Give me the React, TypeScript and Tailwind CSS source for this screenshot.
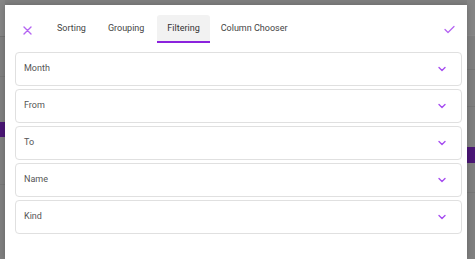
import React from "react";

const fields = ["Month", "From", "To", "Name", "Kind"];

function Chevron() {
  return (
    <svg width="10" height="10" viewBox="0 0 10 10" fill="none">
      <path d="M2 3.5 L5 6.5 L8 3.5" stroke="#a64df0" strokeWidth="1.4" strokeLinecap="round" strokeLinejoin="round" />
    </svg>
  );
}

export default function App() {
  return (
    <div className="relative w-[475px] h-[259px] overflow-hidden bg-[#7f7f7f]" style={{ fontFamily: "Roboto, 'Liberation Sans', sans-serif" }}>
      {/* background page under overlay */}
      <div className="flex h-full justify-between">
        <div className="flex w-[5px] flex-col">
          <div className="h-[37px] border-b border-[#727272] bg-[#858585]" />
          <div className="h-[40px] border-b border-[#777]" />
          <div className="h-[45px]" />
          <div className="h-[15px] bg-[#4a1675]" />
          <div className="h-[48px] border-b border-[#777]" />
        </div>
        <div className="flex w-[8px] flex-col">
          <div className="h-[36px] border-b border-[#888] bg-[#858585]" />
          <div className="h-[34px] border-b border-[#777]" />
          <div className="h-[37px] border-b border-[#777]" />
          <div className="h-[40px]" />
          <div className="h-[16px] bg-[#4a1675]" />
          <div className="h-[30px] border-b border-[#777]" />
        </div>
      </div>

      {/* dialog */}
      <div className="absolute left-[5px] top-[5px] w-[462px] h-[254px] bg-white shadow-[0_0_6px_rgba(0,0,0,0.2)]">
        <div className="flex h-[38px] items-end pl-[16px] pr-[12px]">
          <div className="flex h-[26px] w-[12px] items-center justify-center">
            <svg width="9" height="9" viewBox="0 0 9 9">
              <path d="M1 1 L8 8 M8 1 L1 8" stroke="#b565f2" strokeWidth="1.4" strokeLinecap="round" />
            </svg>
          </div>
          <div className="ml-[13px] flex h-[28px] text-[9px] text-[#444]">
            <div className="flex h-full items-center px-[11px] pb-[1px]">Sorting</div>
            <div className="flex h-full items-center pl-[11px] pr-[13px] pb-[1px]">Grouping</div>
            <div className="flex h-full items-center rounded-t-[3px] border-b-2 border-[#8b22dd] bg-[#f2f2f2] px-[10px] pt-[1px] text-[#333]">Filtering</div>
            <div className="flex h-full items-center px-[11px] pb-[1px]">Column Chooser</div>
          </div>
          <div className="ml-auto flex h-[28px] items-center">
            <svg width="11" height="9" viewBox="0 0 11 9">
              <path d="M1 4.5 L4 7.5 L10 1.5" stroke="#b565f2" strokeWidth="1.3" fill="none" strokeLinecap="round" strokeLinejoin="round" />
            </svg>
          </div>
        </div>
        <div className="mt-[9px] flex flex-col gap-[3px] pl-[10px] pr-[5px]">
          {fields.map((f) => (
            <div key={f} className="flex h-[34px] items-center justify-between rounded-[4px] border border-[#e0e0e0] pl-[8px] pr-[14px]">
              <span className="text-[9px] text-[#555]">{f}</span>
              <Chevron />
            </div>
          ))}
        </div>
      </div>
    </div>
  );
}
